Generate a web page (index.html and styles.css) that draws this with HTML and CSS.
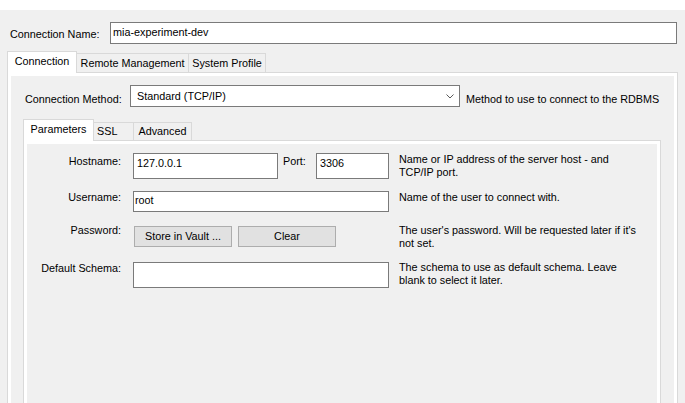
FILE: index.html
```html
<!DOCTYPE html>
<html>
<head>
<meta charset="utf-8">
<link rel="stylesheet" href="styles.css">
</head>
<body>
<div class="topband"></div>
<div class="name-row">
  <span class="name-label">Connection Name:</span>
  <div class="field name-input">mia-experiment-dev</div>
</div>
<div class="outer-tabs">
  <div class="tab-strip">
    <div class="tab sel t-conn">Connection</div>
    <div class="tab t-remote">Remote Management</div>
    <div class="tab t-sys">System Profile</div>
  </div>
  <div class="panel outer-panel">
    <div class="method-row">
      <span class="method-label">Connection Method:</span>
      <div class="select"><span class="select-text">Standard (TCP/IP)</span><svg class="chev" width="8" height="5" viewBox="0 0 8 5"><polyline points="0.5,0.5 4,4 7.5,0.5" fill="none" stroke="#5a5a5a" stroke-width="1"/></svg></div>
      <span class="method-desc">Method to use to connect to the RDBMS</span>
    </div>
    <div class="inner-tabs">
      <div class="tab-strip inner-strip">
        <div class="itab sel t-par">Parameters</div>
        <div class="itab t-ssl">SSL</div>
        <div class="itab t-adv">Advanced</div>
      </div>
      <div class="panel inner-panel">
        <div class="frow r1">
          <span class="flabel l1">Hostname:</span>
          <div class="fcell">
            <div class="field host-input tall">127.0.0.1</div>
            <span class="port-label">Port:</span>
            <div class="field port-input tall">3306</div>
          </div>
          <span class="fdesc d1">Name or IP address of the server host - and<br>TCP/IP port.</span>
        </div>
        <div class="frow r2">
          <span class="flabel">Username:</span>
          <div class="fcell">
            <div class="field user-input">root</div>
          </div>
          <span class="fdesc">Name of the user to connect with.</span>
        </div>
        <div class="frow r3">
          <span class="flabel l3">Password:</span>
          <div class="fcell">
            <div class="btn store-btn">Store in Vault ...</div>
            <div class="btn clear-btn">Clear</div>
          </div>
          <span class="fdesc d3">The user's password. Will be requested later if it's<br>not set.</span>
        </div>
        <div class="frow r4">
          <span class="flabel">Default Schema:</span>
          <div class="fcell">
            <div class="field schema-input"></div>
          </div>
          <span class="fdesc d4">The schema to use as default schema. Leave<br>blank to select it later.</span>
        </div>
      </div>
    </div>
  </div>
</div>
</body>
</html>
```

FILE: styles.css
```css
html, body {
  margin: 0;
  padding: 0;
  height: 403px;
  overflow: hidden;
}
body {
  background: #f0f0f0;
  font-family: "Liberation Sans", Arial, sans-serif;
  font-size: 10.8px;
  line-height: 13px;
  color: #000;
}
.topband {
  height: 10px;
  background: #fff;
}
.name-row {
  display: flex;
  align-items: flex-start;
  margin-top: 12px;
  padding-left: 10px;
  height: 22px;
}
.name-label {
  width: 100px;
  padding-top: 6px;
}
.field {
  box-sizing: border-box;
  background: #fff;
  border: 1px solid #7a7a7a;
  white-space: nowrap;
}
.name-input {
  width: 567px;
  height: 22px;
  padding: 3px 0 0 2px;
}
.outer-tabs {
  margin: 7px 0 0 7px;
  width: 671px;
}
.tab-strip {
  display: flex;
  align-items: flex-end;
  height: 22px;
  margin-bottom: -1px;
  position: relative;
  z-index: 1;
}
.tab {
  box-sizing: border-box;
  height: 19px;
  margin-bottom: 1px;
  border-top: 1px solid #d9d9d9;
  border-right: 1px solid #d9d9d9;
  text-align: center;
  padding-top: 3px;
  white-space: nowrap;
}
.tab.sel {
  height: 22px;
  margin-bottom: 0;
  border-left: 1px solid #d9d9d9;
  background: #fff;
  padding-top: 3px;
}
.t-conn { width: 70px; }
.t-remote { width: 112px; }
.t-sys { width: 77px; }
.panel {
  box-sizing: border-box;
  border: 1px solid #d9d9d9;
  background: #f0f0f0;
  box-shadow: inset 0 0 0 3px #fff;
}
.outer-panel {
  height: 500px;
  padding: 12px 0 0 15px;
}
.method-row {
  display: flex;
  align-items: flex-start;
  height: 22px;
}
.method-label {
  width: 105px;
  margin-left: 2px;
  padding-top: 8px;
  white-space: nowrap;
}
.select {
  box-sizing: border-box;
  width: 330px;
  height: 22px;
  border: 1px solid #7a7a7a;
  background: #fff;
  display: flex;
  align-items: center;
  padding-left: 6px;
}
.select-text {
  flex: 1;
}
.chev {
  margin-right: 5px;
  margin-top: 1px;
}
.method-desc {
  margin-left: 6px;
  padding-top: 8px;
  white-space: nowrap;
}
.inner-tabs {
  margin-top: 12px;
  width: 638px;
}
.inner-strip {
  height: 22px;
}
.itab {
  box-sizing: border-box;
  height: 18px;
  margin-bottom: 1px;
  border-top: 1px solid #d9d9d9;
  border-right: 1px solid #d9d9d9;
  text-align: center;
  padding-top: 2px;
  white-space: nowrap;
}
.itab.sel {
  height: 22px;
  margin-bottom: 0;
  border-left: 1px solid #d9d9d9;
  background: #fff;
  padding-top: 3px;
}
.t-par { width: 71px; }
.t-ssl { width: 40px; text-align: left; padding-left: 3px; }
.t-adv { width: 58px; }
.inner-panel {
  height: 400px;
  padding: 12px 0 0 0;
}
.frow {
  display: flex;
  align-items: flex-start;
}
.r1 { height: 26px; }
.r2 { height: 21px; margin-top: 12px; }
.r3 { height: 21px; margin-top: 14px; }
.r4 { height: 26px; margin-top: 15px; }
.flabel {
  width: 97px;
  text-align: right;
  white-space: nowrap;
}
.l1 { padding-top: 2px; }
.l3 { margin-top: -2px; }
.fcell {
  width: 256px;
  margin-left: 12px;
  display: flex;
  align-items: flex-start;
}
.fdesc {
  margin-left: 10px;
  white-space: nowrap;
  line-height: 12.5px;
}
.d3 { margin-top: -2px; }
.d4 { margin-top: -1px; }
.tall {
  height: 26px;
  padding: 3px 0 0 3px;
}
.host-input { width: 145px; }
.port-label {
  width: 38px;
  padding-left: 5px;
  box-sizing: border-box;
  padding-top: 2px;
}
.port-input { width: 73px; }
.user-input {
  width: 256px;
  height: 21px;
  padding: 2px 0 0 1px;
}
.schema-input {
  width: 256px;
  height: 26px;
}
.btn {
  box-sizing: border-box;
  width: 98px;
  height: 21px;
  background: #e1e1e1;
  border: 1px solid #adadad;
  display: flex;
  align-items: center;
  justify-content: center;
  white-space: nowrap;
}
.store-btn { margin-left: 1px; }
.clear-btn { margin-left: 6px; }
```
